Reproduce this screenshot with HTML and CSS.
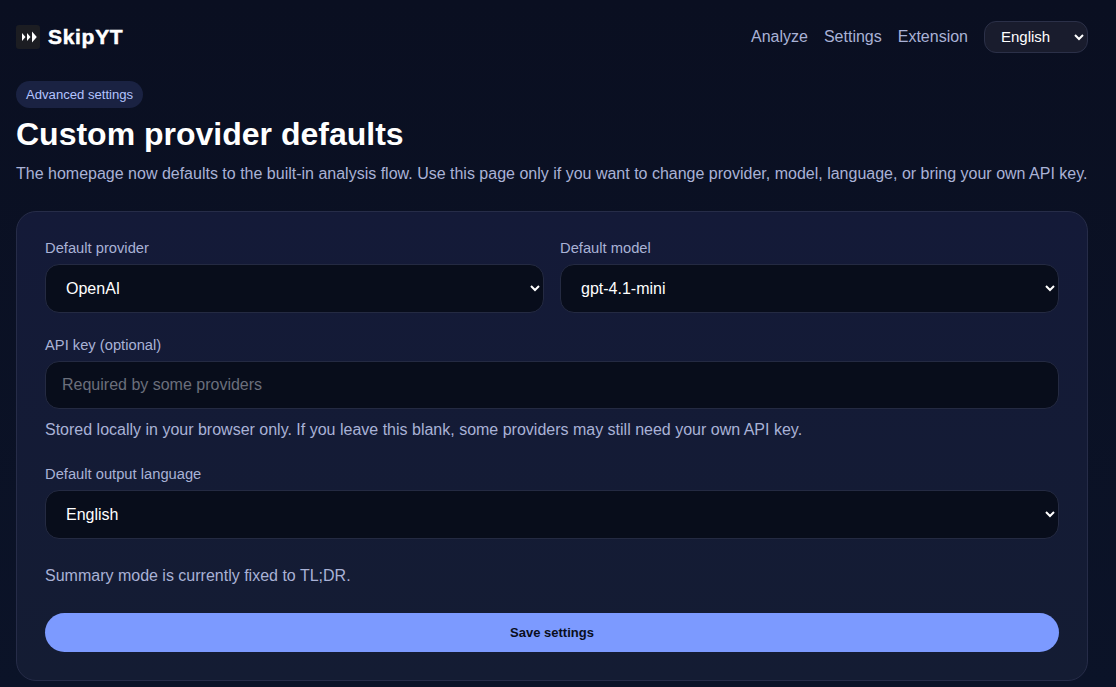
FILE: index.html
```html
<!DOCTYPE html>
<html lang="en">
<head>
<meta charset="utf-8">
<title>SkipYT</title>
<link rel="stylesheet" href="styles.css">
</head>
<body>
<div class="page">
  <header class="topbar">
    <a class="brand" href="#">
      <span class="logo">
        <svg width="24" height="24" viewBox="0 0 24 24" aria-hidden="true"><path d="M6 8l3.500 4-3.500 4zM11 8l3.500 4-3.500 4zM16 6.500l4.800 5.500-4.800 5.500z" fill="#fff"/></svg>
      </span>
      <span class="brand-name">SkipYT</span>
    </a>
    <nav class="nav">
      <a href="#">Analyze</a>
      <a href="#">Settings</a>
      <a href="#">Extension</a>
      <select class="lang"><option>English</option></select>
    </nav>
  </header>
  <main>
    <span class="pill">Advanced settings</span>
    <h1 class="title">Custom provider defaults</h1>
    <p class="lead">The homepage now defaults to the built-in analysis flow. Use this page only if you want to change provider, model, language, or bring your own API key.</p>
    <form class="card">
      <div class="two">
        <label class="field"><span class="label">Default provider</span>
          <select class="control"><option>OpenAI</option></select></label>
        <label class="field"><span class="label">Default model</span>
          <select class="control"><option>gpt-4.1-mini</option></select></label>
      </div>
      <label class="field"><span class="label">API key (optional)</span>
        <input class="control text" placeholder="Required by some providers"></label>
      <p class="hint">Stored locally in your browser only. If you leave this blank, some providers may still need your own API key.</p>
      <label class="field"><span class="label">Default output language</span>
        <select class="control"><option>English</option></select></label>
      <p class="hint mode">Summary mode is currently fixed to TL;DR.</p>
      <button class="save" type="button">Save settings</button>
    </form>
  </main>
</div>
</body>
</html>
```
FILE: styles.css
```css
* { box-sizing: border-box; }
html, body { height: 100%; }
body {
  margin: 0;
  overflow: hidden;
  background: linear-gradient(180deg, #0a0f21 0%, #0b1328 100%);
  color: #fff;
  font-family: "Liberation Sans", Arial, sans-serif;
  color-scheme: dark;
}
.page { padding: 0 28px 0 16px; }
.topbar {
  display: flex;
  align-items: center;
  justify-content: space-between;
  height: 73px;
}
.brand { display: flex; align-items: center; gap: 8px; color: #fff; text-decoration: none; }
.logo {
  display: flex;
  width: 24px;
  height: 24px;
  background: #1c1d22;
  border-radius: 3px;
}
.brand-name { font-size: 21px; font-weight: 700; -webkit-text-stroke: 0.5px #fff; letter-spacing: 0.7px; }
.nav { display: flex; align-items: center; gap: 16px; }
.nav a { color: #a9b2d6; font-size: 16px; text-decoration: none; }
.lang {
  width: 104px;
  height: 32px;
  padding: 0 12px;
  background: #191c2d;
  color: #fff;
  border: 1px solid #2b3048;
  border-radius: 12px;
  font: 15px "Liberation Sans", Arial, sans-serif;
}
.pill {
  display: inline-block;
  margin-top: 8px;
  padding: 0 10px;
  height: 27px;
  line-height: 27px;
  border-radius: 14px;
  background: #1a2242;
  color: #b4c4ff;
  font-size: 13.12px;
  vertical-align: top;
}
.title { margin: 6px 0 0; font-size: 32px; line-height: 40px; font-weight: 700; }
.lead { margin: 10px 0 0; font-size: 16px; line-height: 20px; color: #a9b2d6; white-space: nowrap; }
.card {
  margin-top: 27px;
  padding: 28px;
  display: flex;
  flex-direction: column;
  background: linear-gradient(180deg, #141a38 0%, #141c33 100%);
  border: 1px solid #262c48;
  border-radius: 20px;
}
.two { display: grid; grid-template-columns: 1fr 1fr; gap: 16px; margin-bottom: 24px; }
.field { display: flex; flex-direction: column; gap: 8px; }
.label { font-size: 14.72px; line-height: 16px; color: #a9b2d6; }
.control {
  width: 100%;
  height: 49px;
  padding: 0 16px;
  background: #080d1b;
  color: #fff;
  border: 1px solid #242a42;
  border-radius: 14px;
  font: 16px "Liberation Sans", Arial, sans-serif;
}
.text { height: 48px; }
.text::placeholder { color: #6b6f7c; opacity: 1; }
.hint { margin: 11px 0 0; font-size: 16px; line-height: 20px; color: #a9b2d6; }
.hint + .field { margin-top: 26px; }
.mode { margin-top: 27px; }
.save {
  margin-top: 27px;
  height: 39px;
  border: 0;
  border-radius: 20px;
  background: #7c9aff;
  color: #0a0e20;
  font: 700 13px "Liberation Sans", Arial, sans-serif;
}
```
